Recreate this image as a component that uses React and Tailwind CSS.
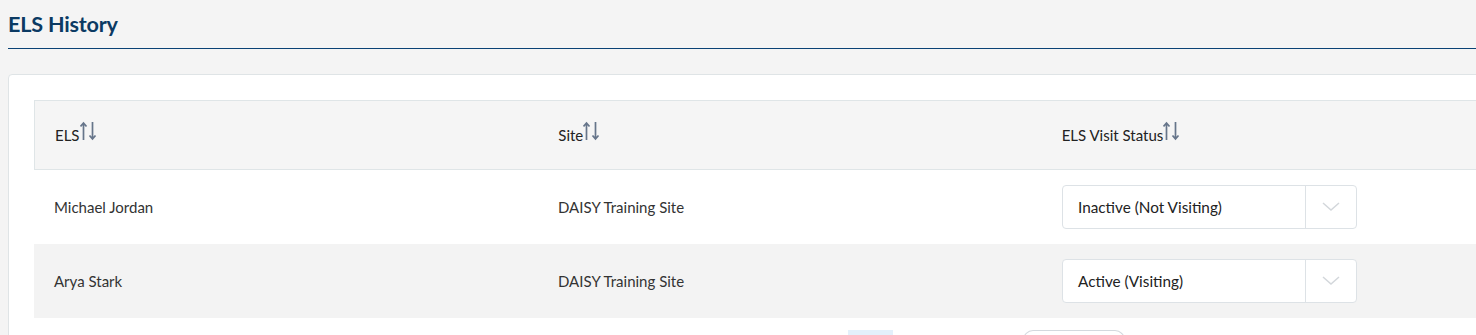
import React from "react";

const SortIcon = () => (
  <svg width="18" height="22" viewBox="0 0 18 22" className="-mt-[9px] text-[#66758a]" fill="none" stroke="currentColor" strokeWidth="1.7">
    <path d="M3.5 20V3M0.5 6.5 3.5 3l3 3.5" />
    <path d="M12.5 2v17M9.5 15.5 12.5 19l3-3.5" />
  </svg>
);

const Chevron = () => (
  <svg width="18" height="10" viewBox="0 0 18 10" fill="none" stroke="#d3d7db" strokeWidth="1.5">
    <path d="M1 1l8 7 8-7" />
  </svg>
);

const StatusSelect = ({ value }) => (
  <div className="flex w-[295px] h-[44px] bg-white border border-[#dde2e6] rounded-[4px]">
    <div className="flex-1 flex items-center pl-[15px] text-[15.3px] text-[#222]">{value}</div>
    <div className="w-[51px] border-l border-[#dde2e6] flex items-center justify-center">
      <Chevron />
    </div>
  </div>
);

const rows = [
  { els: "Michael Jordan", site: "DAISY Training Site", status: "Inactive (Not Visiting)" },
  { els: "Arya Stark", site: "DAISY Training Site", status: "Active (Visiting)" },
];

export default function App() {
  return (
    <div className="w-[1476px] h-[335px] overflow-hidden bg-[#f4f4f4] font-['Lato','Open_Sans',sans-serif]">
      <div className="pl-2 pt-[10px]">
        <h1 className="text-[21.6px] font-bold text-[#0b3a63] leading-[28px] pb-[10px] border-b border-[#0a4275] tracking-[-0.2px]">
          ELS History
        </h1>
        <div className="mt-[25px] w-[1520px] bg-white border border-[#dfe4e6] rounded-[4px] pt-[25px] pl-[25px]">
          <div className="w-[1512px]">
            <div className="flex h-[70px] bg-[#f5f5f5] border border-[#dfe5e7] items-center text-[15px] text-[#222]">
              {["ELS", "Site", "ELS Visit Status"].map((h) => (
                <div key={h} className="w-[504px] pl-5 flex items-center">
                  <span>{h}</span>
                  <SortIcon />
                </div>
              ))}
            </div>
            {rows.map((r, i) => (
              <div
                key={r.els}
                className={`flex h-[74px] items-center text-[15px] text-[#333] ${i % 2 ? "bg-[#f3f3f3]" : "bg-white"}`}
              >
                <div className="w-[504px] pl-5">{r.els}</div>
                <div className="w-[504px] pl-5">{r.site}</div>
                <div className="w-[504px] pl-5">
                  <StatusSelect value={r.status} />
                </div>
              </div>
            ))}
            <div className="flex h-[20px] pt-[12px]">
              <div className="ml-[814px] w-[45px] h-[10px] bg-[#e3f0fb]" />
              <div className="ml-[130px] w-[102px] h-[10px] border border-b-0 border-[#d3d9de] rounded-t-[10px] bg-white" />
            </div>
          </div>
        </div>
      </div>
    </div>
  );
}
